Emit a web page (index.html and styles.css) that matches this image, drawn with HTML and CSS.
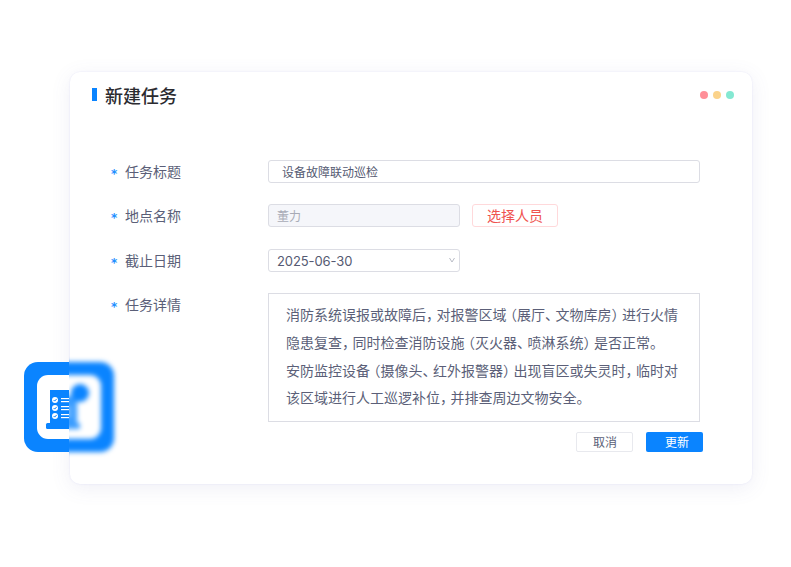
FILE: index.html
```html
<!DOCTYPE html>
<html lang="zh">
<head>
<meta charset="utf-8">
<title>新建任务</title>
<link rel="stylesheet" href="styles.css">
</head>
<body>
<main class="card">
  <header class="head">
    <h1 class="title">新建任务</h1>
    <div class="dots"><i class="dot red"></i><i class="dot yellow"></i><i class="dot green"></i></div>
  </header>
  <form class="form">
    <div class="row">
      <label class="label"><span class="star">*</span>任务标题</label>
      <div class="field wide"><span class="titletext">设备故障联动巡检</span></div>
    </div>
    <div class="row">
      <label class="label"><span class="star">*</span>地点名称</label>
      <div class="controls">
        <div class="field narrow disabled">董力</div>
        <div class="pick">选择人员</div>
      </div>
    </div>
    <div class="row">
      <label class="label"><span class="star">*</span>截止日期</label>
      <div class="field narrow date">2025-06-30
        <svg class="chev" width="8" height="6" viewBox="0 0 8 6"><path d="M1.5 1l2.5 4 2.5-4" fill="none" stroke="#b9bcc6" stroke-width="1"/></svg>
      </div>
    </div>
    <div class="row top">
      <label class="label"><span class="star">*</span>任务详情</label>
      <div class="textarea">
        <p>消防系统误报或故障后<span class="pc">，</span>对报警区域<span class="po">（</span>展厅<span class="pc">、</span>文物库房<span class="pc">）</span>进行火情隐患复查<span class="pc">，</span>同时检查消防设施<span class="po">（</span>灭火器<span class="pc">、</span>喷淋系统<span class="pc">）</span>是否正常。</p>
        <p>安防监控设备<span class="po">（</span>摄像头<span class="pc">、</span>红外报警器<span class="pc">）</span>出现盲区或失灵时<span class="pc">，</span>临时对该区域进行人工巡逻补位<span class="pc">，</span>并排查周边文物安全。</p>
      </div>
    </div>
    <div class="actions">
      <div class="btn cancel">取消</div>
      <div class="btn update">更新</div>
    </div>
  </form>
</main>
<div class="badge" aria-hidden="true">
  <div class="half left">
    <svg class="glyph" width="90" height="90" viewBox="0 0 90 90">
      <rect width="90" height="90" rx="14" fill="#0a84ff"/>
      <rect x="13" y="13" width="64" height="64" rx="11" fill="#fff"/>
      <rect x="26" y="28" width="34" height="33" fill="#0a84ff"/>
      <rect x="22" y="61" width="38" height="6" rx="1.5" fill="#0a84ff"/>
      <g fill="#fff">
        <circle cx="31" cy="38" r="3"/><circle cx="31" cy="46" r="3"/><circle cx="31" cy="54" r="3"/>
        <rect x="37" y="36" width="10" height="1.2"/><rect x="37" y="39" width="10" height="1.2"/>
        <rect x="37" y="44" width="10" height="1.2"/><rect x="37" y="47" width="10" height="1.2"/>
        <rect x="37" y="52" width="10" height="1.2"/><rect x="37" y="55" width="10" height="1.2"/>
      </g>
      <path d="M29.6 38l1.1 1.1 2-2.2M29.6 46l1.1 1.1 2-2.2M29.6 54l1.1 1.1 2-2.2" fill="none" stroke="#0a84ff" stroke-width="1"/>
    </svg>
  </div>
  <div class="half right">
    <svg class="glyph shifted" width="90" height="90" viewBox="0 0 90 90">
      <rect width="90" height="90" rx="14" fill="#0a84ff"/>
      <rect x="13" y="13" width="64" height="64" rx="11" fill="#fff"/>
      <rect x="26" y="34" width="27" height="27" fill="#0a84ff" opacity=".8"/>
      <rect x="22" y="61" width="34" height="6" rx="1.5" fill="#0a84ff" opacity=".8"/>
      <circle cx="56" cy="31" r="9" fill="#0a84ff"/>
      <g fill="#fff">
        <rect x="37" y="46" width="10" height="1.6"/><rect x="37" y="52" width="10" height="1.6"/>
      </g>
    </svg>
  </div>
</div>
</body>
</html>
```
FILE: styles.css
```css
* { box-sizing: border-box; }
html, body { margin: 0; background: #fff; }
body {
  width: 791px; height: 567px; padding: 72px 0 0 70px; overflow: hidden; position: relative;
  font-family: "Noto Sans CJK SC", "Noto Sans", sans-serif; color: #555a72;
}
.card {
  width: 682px; height: 412px; background: #fff; border-radius: 10px;
  box-shadow: 0 0 2px rgba(150,150,230,.2), 0 4px 20px rgba(100,100,170,.10);
}
.head { display: flex; justify-content: space-between; align-items: center; padding: 10px 18px 0 22px; height: 35px; }
.title {
  margin: 0; font-size: 18px; font-weight: 500; line-height: 28px; color: #2b2b30;
  display: flex; align-items: center; gap: 8px;
}
.title::before { content: ""; width: 5px; height: 13px; background: #0a84ff; }
.dots { display: flex; gap: 5px; }
.dot { width: 8px; height: 8px; border-radius: 50%; }
.red { background: #ff8f98; }
.yellow { background: #fbd38b; }
.green { background: #84e8d2; }
.form { padding: 53px 52px 0 40px; }
.row { display: flex; align-items: center; height: 23px; margin-bottom: 21.4px; }
.row.top { align-items: flex-start; height: 129px; margin-bottom: 10px; }
.label { width: 158px; height: 23px; font-size: 14px; line-height: 23px; display: flex; color: #5b5f78; }
.star {
  width: 15px; height: 23px; color: #1e90ff; font-family: "DejaVu Sans", sans-serif;
  font-size: 12px; font-weight: 700; line-height: 28px; padding-left: 1px;
}
.field {
  height: 23px; border: 1px solid #dcdde4; border-radius: 3px; background: #fff;
  font-size: 13px; line-height: 21px; padding-left: 8px;
}
.wide { width: 432px; padding-left: 13px; }
.titletext { font-size: 12px; }
.narrow { width: 192px; }
.disabled { background: #f5f6fa; color: #a8abb6; font-size: 12px; }
.controls { display: flex; gap: 12px; }
.pick {
  width: 86px; height: 23px; border: 1px solid #ffd9db; border-radius: 3px;
  color: #ef5350; font-size: 14px; line-height: 21px; text-align: center;
}
.date {
  display: flex; justify-content: space-between; align-items: center; padding: 2px 3px 0 8px;
  font-family: "Inter", "Noto Sans CJK SC", sans-serif; letter-spacing: -.1px;
}
.chev { margin-top: -2px; }
.textarea {
  width: 432px; height: 129px; border: 1px solid #dcdde4; padding: 7px 17px 0 17px;
  font-size: 14px; line-height: 27.7px; color: #5b5f78;
}
.textarea p { margin: 0; }
.pc { font-feature-settings: "halt"; margin-right: 3.5px; }
.po { font-feature-settings: "halt"; margin-left: 3.5px; }
.actions { display: flex; justify-content: flex-end; gap: 13px; margin-right: -3px; }
.btn { width: 57px; height: 20px; border-radius: 2px; font-size: 12px; line-height: 20px; text-align: center; }
.cancel { border: 1px solid #e8e9ee; line-height: 18px; color: #5b5f78; padding-left: 1px; }
.update { background: #0a84ff; color: #fff; padding-left: 5px; }
.badge { position: absolute; left: 24px; top: 362px; width: 90px; height: 90px; display: flex; }
.half { width: 45px; height: 90px; overflow: hidden; }
.right { overflow: visible; clip-path: inset(-10px -10px -10px 0); border-left: 1px solid rgba(255,255,255,.4); }
.right .glyph { filter: blur(2.5px); }
.glyph { display: block; }
.shifted { margin-left: -46px; }
```
